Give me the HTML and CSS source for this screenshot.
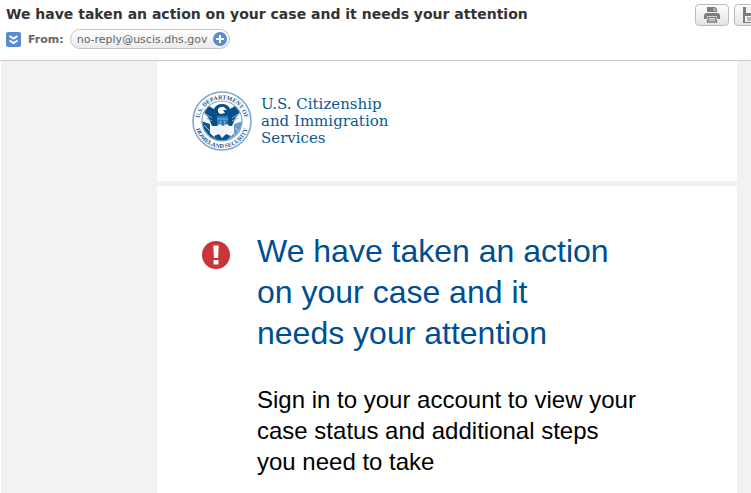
FILE: index.html
```html
<!DOCTYPE html>
<html lang="en">
<head>
<meta charset="utf-8">
<title>We have taken an action on your case and it needs your attention</title>
<link rel="stylesheet" href="styles.css">
</head>
<body>
<header class="message-header">
  <div class="message-info">
    <h1 class="subject">We have taken an action on your case and it needs your attention</h1>
    <div class="sender">
      <button class="expand" type="button" aria-label="Show details">
        <svg width="15" height="15" viewBox="0 0 15 15" fill="none" stroke="#fff" stroke-width="1.8"><path d="M3.500 4 7.500 6.600 11.500 4M3.500 8.500 7.500 11.100 11.500 8.500"/></svg>
      </button>
      <span class="from-label">From:</span>
      <span class="address">no-reply@uscis.dhs.gov
        <button class="add" type="button" aria-label="Add contact">
          <svg width="14" height="14" viewBox="0 0 14 14"><circle cx="7" cy="7" r="7" fill="#5b8bd0"/><path d="M7 3v8M3 7h8" stroke="#fff" stroke-width="2"/></svg>
        </button>
      </span>
    </div>
  </div>
  <div class="tools">
    <button class="tool" type="button" aria-label="Print">
      <svg width="18" height="18" viewBox="0 0 18 18"><path d="M4 1h8l2 2v3H4z" fill="#7d7d7d"/><path d="M11 2v2h2" fill="none" stroke="#ddd"/><path d="M1 10q0-3 3-3h10q3 0 3 3v3h-2.500l-1-3H4.500l-1 3H1z" fill="#7d7d7d"/><path d="M5.500 11.500h7l1 4.500h-9z" fill="#f5f5f5" stroke="#7d7d7d" stroke-width="1.500"/><path d="M6 14h6" stroke="#7d7d7d"/></svg>
    </button>
    <button class="tool" type="button" aria-label="Save">
      <svg width="18" height="18" viewBox="0 0 18 18"><path d="M1 1h14l2 2v14H1z" fill="#7d7d7d"/><path d="M4 1h8v6H4zM3 10h12v6H3z" fill="#f2f2f2"/><path d="M5 12h8M5 14h8" stroke="#7d7d7d"/></svg>
    </button>
  </div>
</header>
<main class="message-body">
  <section class="brand">
    <svg class="seal" width="60" height="60" viewBox="0 0 60 60" role="img" aria-label="Department seal">
      <defs>
        <path id="arc-top" d="M8.500 39.500A23 23 0 1 1 51.500 39.500"/>
        <path id="arc-bottom" d="M3 30A27 27 0 0 0 57 30"/>
        <clipPath id="disc"><circle cx="30" cy="30" r="19.500"/></clipPath>
      </defs>
      <circle cx="30" cy="30" r="29" fill="#fff" stroke="#83a5cc" stroke-width="1.600"/>
      <circle cx="30" cy="30" r="20" fill="#fff" stroke="#7ca4cb" stroke-width="1.200"/>
      <g clip-path="url(#disc)">
        <path d="M9 30 18 33 18 42 25 49H12L7 38z" fill="#0b5592"/>
        <path d="M51 30 42 33 42 42 35 49H48L53 38z" fill="#6c9cc7"/>
        <path d="M10 11 22 18Q24 13 30 13Q36 13 38 18L50 11Q51 20 44 26L40 35H20L16 26Q9 20 10 11z" fill="#074f89"/>
        <path d="M12 22 20 27M14 27 20 30M48 22 40 27M46 27 40 30" stroke="#8db2d4" stroke-width="1"/>
        <path d="M26 18Q28 15 32 16L35 19 31 19 33 22 28 23 26 21z" fill="#fff"/>
        <path d="M25 25h11v9q-1 4-5.500 6Q26 38 25 34z" fill="#337aae"/>
        <path d="M25 28h11M28.500 30v6M32.500 30v6" stroke="#9bbcda" stroke-width=".8"/>
        <path d="M19 35 24 37 27 33 31 35 35 33 39 36 36 39 42 41 37 43 32 42 30 47 27 42 20 42 23 39z" fill="#eef4f9"/>
        <path d="M22 45 27 43 30 47 34 43 39 45 34 50H25z" fill="#075390"/>
        <path d="M12 34 18 40M12 39 17 45M43 37 48 41M41 42 45 46" stroke="#d9e6f1" stroke-width=".8"/>
      </g>
      <g class="seal-text">
        <text><textPath href="#arc-top" startOffset="50%">U.S. DEPARTMENT OF</textPath></text>
        <text><textPath href="#arc-bottom" startOffset="50%">HOMELAND SECURITY</textPath></text>
      </g>
    </svg>
    <p class="agency">U.S. Citizenship<br>and Immigration<br>Services</p>
  </section>
  <section class="notice">
    <svg class="alert" width="28" height="28" viewBox="0 0 28 28" role="img" aria-label="Important"><circle cx="14" cy="14" r="14" fill="#cb3438"/><path d="M11.300 4.500h5.400l-.6 12.500h-4.200zM11.500 19h5v4.500h-5z" fill="#fff"/></svg>
    <div class="notice-text">
      <h2>We have taken an action on your case and it needs your attention</h2>
      <p>Sign in to your account to view your case status and additional steps you need to take</p>
    </div>
  </section>
</main>
</body>
</html>
```
FILE: styles.css
```css
* { box-sizing: border-box; }

body {
  margin: 0;
  min-height: 100vh;
  display: flex;
  flex-direction: column;
  background: #fff;
  font-family: "Liberation Sans", Arial, sans-serif;
  overflow-x: hidden;
}

h1, h2, p { margin: 0; }

button { padding: 0; border: 0; flex: none; }

svg { display: block; flex: none; }

.message-header {
  display: flex;
  justify-content: space-between;
  height: 61px;
  padding: 4px 0 0 6px;
  border-bottom: 1px solid #c5cad5;
  font-family: "DejaVu Sans", Verdana, sans-serif;
  overflow: hidden;
}

.subject {
  font-size: 14px;
  line-height: 20px;
  color: #333;
  white-space: nowrap;
}

.sender {
  display: flex;
  align-items: center;
  margin-top: 5px;
  font-size: 11px;
  color: #666;
}

.expand {
  width: 15px;
  height: 15px;
  border-radius: 2px;
  background: #5b8bd0;
}

.from-label {
  margin: 0 6px 0 7px;
  font-weight: bold;
}

.address {
  display: flex;
  align-items: center;
  gap: 5px;
  height: 20px;
  padding: 0 2px 0 6px;
  border: 1px solid #c4c4c4;
  border-radius: 10px;
  background: linear-gradient(#fff, #ebebeb);
}

.add { background: none; }

.tools {
  display: flex;
  gap: 5px;
  margin-right: -17px;
}

.tool {
  display: flex;
  align-items: center;
  justify-content: center;
  width: 34px;
  height: 22px;
  border: 1px solid #bbb;
  border-radius: 4px;
  background: linear-gradient(#fff, #e4e4e4);
}

.message-body {
  flex: 1;
  display: flex;
  flex-direction: column;
  gap: 5px;
  margin-left: 1px;
  padding: 0 14px 0 156px;
  background: #f2f2f2;
}

.brand {
  display: flex;
  align-items: center;
  gap: 9px;
  height: 120px;
  padding-left: 35px;
  background: #fff;
}

.seal-text {
  font-family: "Liberation Serif", serif;
  font-size: 6px;
  font-weight: bold;
  fill: #145a94;
  text-anchor: middle;
}

.agency {
  font-family: "DejaVu Serif", serif;
  font-size: 15px;
  line-height: 17px;
  color: #075a92;
}

.notice {
  flex: 1;
  display: flex;
  gap: 27px;
  padding: 45px 95px 16px 45px;
  background: #fff;
}

.alert { margin-top: 10px; }

.notice h2 {
  font-size: 32px;
  line-height: 41px;
  font-weight: normal;
  color: #004e92;
  max-width: 360px;
}

.notice p {
  margin-top: 30px;
  font-size: 24px;
  line-height: 31px;
  color: #000;
}
```
